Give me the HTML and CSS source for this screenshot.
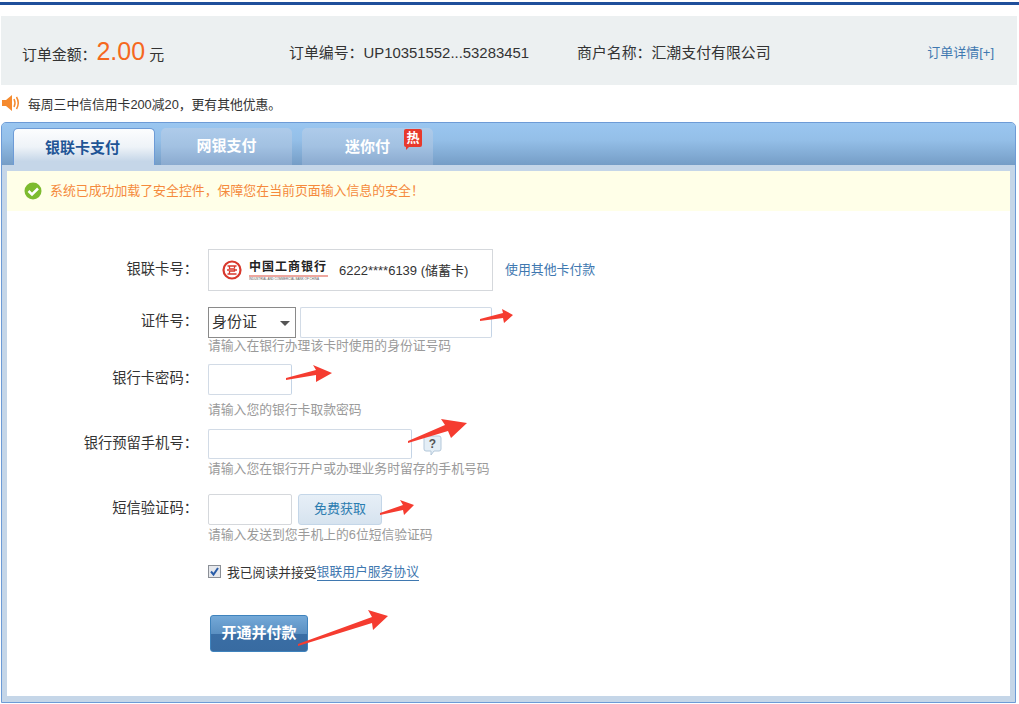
FILE: index.html
```html
<!DOCTYPE html>
<html lang="zh-CN">
<head>
    <meta charset="UTF-8">
    <title>银联在线支付</title>
    <link rel="stylesheet" href="styles.css">
</head>
<body>
    <div class="top-line"></div>

    <!-- Order summary -->
    <div class="order-bar">
        <div class="order-amount">订单金额：<span class="amount">2.00</span> <span class="unit">元</span></div>
        <div class="order-no">订单编号：UP10351552...53283451</div>
        <div class="order-shop">商户名称：汇潮支付有限公司</div>
        <a class="order-detail" href="#">订单详情[+]</a>
    </div>

    <div class="promo">
        <svg class="promo-icon" width="19" height="18" viewBox="0 0 19 18">
            <path d="M0 6h4l6-5v16l-6-5H0z" fill="#f58a2e"/>
            <path d="M12 5q2 4 0 8M14.500 3q3.500 6 0 12" fill="none" stroke="#f58a2e" stroke-width="1.500"/>
        </svg>
        每周三中信信用卡200减20，更有其他优惠。
    </div>

    <div class="panel">
        <div class="tabs">
            <div class="tab tab-active">银联卡支付</div>
            <div class="tab">网银支付</div>
            <div class="tab tab-mini">迷你付<span class="hot">热</span></div>
        </div>

        <div class="panel-body">
            <div class="safe-tip">
                <svg width="18" height="18" viewBox="0 0 18 18">
                    <circle cx="9" cy="9" r="8.500" fill="#7dbb2f"/>
                    <path d="M4.500 9l3.500 3.500 6-6" fill="none" stroke="#fff" stroke-width="2.500"/>
                </svg>
                <span class="safe-text">系统已成功加载了安全控件，保障您在当前页面输入信息的安全！</span>
            </div>

            <div class="form">
                <div class="row">
                    <div class="row-label">银联卡号：</div>
                    <div class="card-box">
                        <svg class="bank-mark" width="20" height="20" viewBox="0 0 20 20">
                            <circle cx="10" cy="10" r="8.500" fill="none" stroke="#d8382c" stroke-width="2.200"/>
                            <path d="M5.500 6h9M5.500 14h9M7.500 6v3h5v2h-5v3M12.500 6v2M7.500 12v2M5 10h2M13 10h2" fill="none" stroke="#d8382c" stroke-width="1.300"/>
                        </svg>
                        <div class="bank-name">
                            <div class="bank-cn">中国工商银行</div>
                            <div class="bank-en">INDUSTRIAL AND COMMERCIAL BANK OF CHINA</div>
                        </div>
                        <div class="card-no">6222****6139 (储蓄卡)</div>
                    </div>
                    <a class="other-card" href="#">使用其他卡付款</a>
                </div>

                <div class="row row-id">
                    <div class="row-label">证件号：</div>
                    <div class="id-select">身份证</div>
                    <input class="text-input id-input" type="text">
                </div>
                <div class="hint hint-id">请输入在银行办理该卡时使用的身份证号码</div>

                <div class="row">
                    <div class="row-label">银行卡密码：</div>
                    <input class="text-input short-input" type="text">
                </div>
                <div class="hint hint-pwd">请输入您的银行卡取款密码</div>

                <div class="row row-phone">
                    <div class="row-label">银行预留手机号：</div>
                    <input class="text-input phone-input" type="text">
                    <svg class="help-icon" width="19" height="21" viewBox="0 0 19 21">
                        <path d="M3 1h13q2 0 2 2v11q0 2-2 2h-5l-3 4v-4H3q-2 0-2-2V3q0-2 2-2z" fill="#e4eef6" stroke="#b4c8da"/>
                        <text x="9.500" y="13" text-anchor="middle" class="help-mark">?</text>
                    </svg>
                </div>
                <div class="hint hint-phone">请输入您在银行开户或办理业务时留存的手机号码</div>

                <div class="row row-sms">
                    <div class="row-label">短信验证码：</div>
                    <input class="text-input short-input sms-input" type="text">
                    <div class="sms-btn">免费获取</div>
                </div>
                <div class="hint hint-sms">请输入发送到您手机上的6位短信验证码</div>

                <div class="agree">
                    <svg width="13" height="13" viewBox="0 0 13 13">
                        <rect x="0.500" y="0.500" width="12" height="12" fill="#e6e8ec" stroke="#8b8f96"/>
                        <path d="M3 6.500l2.500 3 4.500-6.500" fill="none" stroke="#2a5da8" stroke-width="2"/>
                    </svg>
                    <span class="agree-text">我已阅读并接受</span><a class="agree-link" href="#">银联用户服务协议</a>
                </div>

                <div class="submit-btn">开通并付款</div>
            </div>
        </div>
    </div>

    <!-- Red arrows drawn over the screenshot -->
    <svg class="arrows" width="1019" height="704" viewBox="0 0 1019 704">
        <polygon points="480,319 503,313 502,309 513,315 504,323 503,318 480,321"/>
        <polygon points="286,378 316,370 313,365 332,373 316,382 316,375 286,380"/>
        <polygon points="408,441 445,425 441,419 467,423 451,438 448,431 408,443"/>
        <polygon points="380,513 403,505 400,500 414,505 404,515 403,510 380,515"/>
        <polygon points="298,644 372,617 368,610 388,616 373,630 372,623 298,646"/>
    </svg>
</body>
</html>
```

FILE: styles.css
```css
html, body {
    margin: 0;
    height: 704px;
    overflow: hidden;
    background-color: #fff;
    color: #333;
    font-family: "Liberation Sans", "Noto Sans CJK SC", sans-serif;
}
a {
    color: #3f78b0;
    text-decoration: none;
}
.top-line {
    height: 3px;
    margin-top: 2px;
    background-color: #1f4f9b;
}
.order-bar {
    display: flex;
    align-items: center;
    height: 68px;
    margin: 11px 2px 0 1px;
    padding: 1px 0 0 21px;
    background-color: #ecf0f1;
    font-size: 14.900px;
}
.order-amount {
    width: 267px;
}
.amount {
    color: #f5681e;
    font-size: 25px;
}
.order-no {
    width: 288px;
}
.order-shop {
    flex: 1;
}
.order-detail {
    margin-right: 23px;
    font-size: 13px;
}
.promo {
    display: flex;
    align-items: center;
    gap: 7px;
    height: 36px;
    padding: 0 0 1px 2px;
    font-size: 12.800px;
}
.panel {
    width: 1013px;
    height: 579px;
    margin-left: 1px;
    border: 1px solid #6d9bd6;
    border-radius: 5px 5px 0 0;
    background-color: #c5d6e8;
}
.tabs {
    display: flex;
    box-sizing: border-box;
    height: 42px;
    padding: 5px 0 0 11px;
    border-radius: 4px 4px 0 0;
    background: linear-gradient(#9ac6f0, #94bfe8 40%, #759dc6);
}
.tab {
    position: relative;
    box-sizing: border-box;
    width: 131px;
    height: 37px;
    margin-right: 10px;
    border-radius: 5px 5px 0 0;
    background: linear-gradient(#aecbea, #a2c1e2 50%, #8aaacf);
    color: #fff;
    font-size: 15px;
    font-weight: bold;
    line-height: 36px;
    text-align: center;
}
.tab-active {
    width: 142px;
    margin-right: 6px;
    padding-right: 3px;
    border: 1px solid #6d9bd6;
    border-bottom: 0;
    background: linear-gradient(#fcfdfe, #eef3f8 50%, #c5d6e8 90%);
    color: #1f5596;
    line-height: 37px;
}
.tab-mini {
    line-height: 38px;
}
.hot {
    position: absolute;
    top: 1px;
    right: 11px;
    width: 18px;
    height: 18px;
    border-radius: 2px;
    background-color: #e8392c;
    color: #fff;
    font-size: 13px;
    line-height: 17px;
}
.hot::after {
    content: "";
    position: absolute;
    left: 2px;
    bottom: -3px;
    border-top: 3px solid #e8392c;
    border-right: 3px solid transparent;
}
.panel-body {
    padding: 6px 5px;
}
.safe-tip {
    display: flex;
    align-items: center;
    gap: 8px;
    height: 40px;
    padding-left: 17px;
    background-color: #ffffe8;
    color: #f58a3c;
    font-size: 12.900px;
}
.safe-text {
    margin: 0 0 4px 0;
}
.form {
    box-sizing: border-box;
    height: 485px;
    padding-top: 38px;
    background-color: #fff;
}
.row {
    display: flex;
    align-items: center;
}
.row-label {
    flex: none;
    width: 191px;
    margin: 0 10px 6px 0;
    font-size: 14.300px;
    text-align: right;
}
.card-box {
    display: flex;
    align-items: center;
    box-sizing: border-box;
    width: 285px;
    height: 42px;
    padding-left: 13px;
    border: 1px solid #d5d8dc;
}
.bank-mark {
    margin-right: 7px;
}
.bank-name {
    width: 79px;
    margin-right: 11px;
}
.bank-cn {
    border-bottom: 2px solid #eea79f;
    color: #222;
    font-size: 12px;
    font-weight: bold;
    letter-spacing: 1px;
    line-height: 16px;
    white-space: nowrap;
}
.bank-en {
    overflow: hidden;
    color: #555;
    font-size: 3px;
    line-height: 5px;
    white-space: nowrap;
}
.card-no {
    padding-bottom: 2px;
    font-size: 13px;
    white-space: nowrap;
}
.other-card {
    margin: 0 0 4px 12px;
    font-size: 12.900px;
}
.row-id {
    margin-top: 16px;
}
.id-select {
    position: relative;
    box-sizing: border-box;
    width: 88px;
    height: 31px;
    padding-left: 3px;
    border: 1px solid #8a8a8a;
    font-size: 15px;
    line-height: 28px;
}
.id-select::after {
    content: "";
    position: absolute;
    top: 13px;
    right: 5px;
    border-top: 5px solid #555;
    border-left: 5px solid transparent;
    border-right: 5px solid transparent;
}
.text-input {
    box-sizing: border-box;
    height: 31px;
    margin: 0;
    padding: 0;
    border: 1px solid #d2dbe6;
    border-right-color: #c4d4e6;
    border-radius: 2px;
    background-color: #fff;
    outline: none;
}
.id-input {
    width: 192px;
    margin-left: 4px;
}
.short-input {
    width: 84px;
}
.phone-input {
    width: 204px;
    height: 30px;
}
.help-icon {
    margin: 3px 0 0 11px;
}
.help-mark {
    fill: #555;
    font-size: 12px;
    font-weight: bold;
}
.hint {
    margin-left: 201px;
    color: #9a9a9a;
    font-size: 12.800px;
    line-height: 16px;
}
.hint-id {
    margin-bottom: 10px;
}
.hint-pwd {
    margin-top: 7px;
}
.row-phone {
    margin-top: 11px;
}
.hint-phone {
    margin-top: 2px;
}
.row-sms {
    margin-top: 17px;
}
.sms-input {
    border-color: #d5d8dc;
}
.sms-btn {
    box-sizing: border-box;
    width: 84px;
    height: 31px;
    margin-left: 6px;
    border: 1px solid #c4d6e8;
    border-radius: 3px;
    background: linear-gradient(#e6eff7, #dfe9f3 50%, #d6e3ef);
    color: #2b7cb0;
    font-size: 13px;
    line-height: 27px;
    text-align: center;
}
.hint-sms {
    margin-top: 2px;
}
.agree {
    display: flex;
    align-items: center;
    height: 16px;
    margin: 20px 0 0 201px;
    font-size: 12.800px;
}
.agree-text {
    margin-left: 6px;
}
.agree-link {
    border-bottom: 1px solid #3f78b0;
}
.submit-btn {
    box-sizing: border-box;
    width: 98px;
    height: 37px;
    margin: 36px 0 0 203px;
    border: 1px solid #3f83bd;
    border-radius: 3px;
    background: linear-gradient(#74a9d8, #5b90c2 50%, #3a6ea5 52%, #386ba1);
    color: #fff;
    font-size: 15px;
    font-weight: bold;
    line-height: 34px;
    text-align: center;
}
.arrows {
    position: absolute;
    top: 0;
    left: 0;
    fill: #f53c30;
    pointer-events: none;
}
```
